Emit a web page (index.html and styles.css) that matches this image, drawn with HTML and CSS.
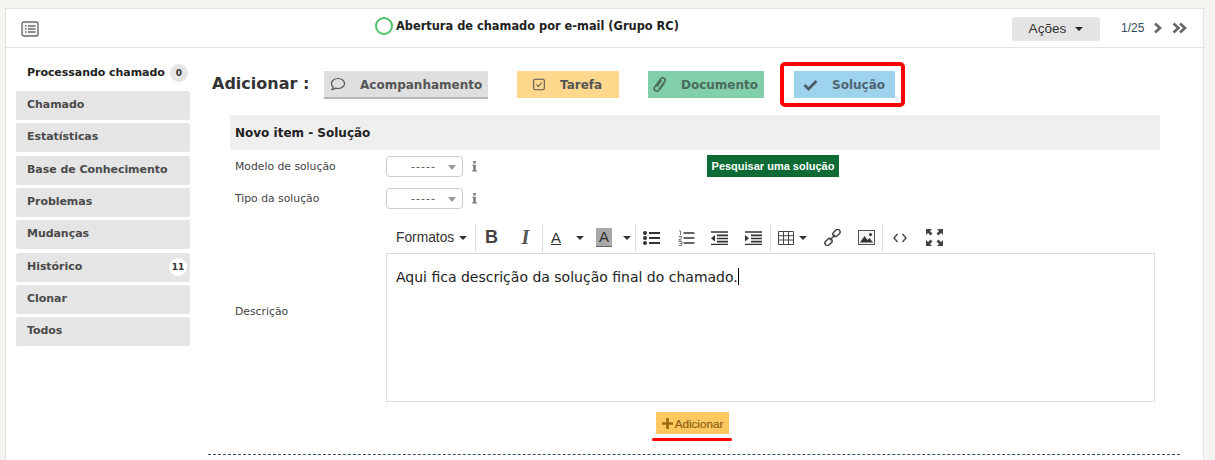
FILE: index.html
```html
<!DOCTYPE html>
<html lang="pt">
<head>
<meta charset="utf-8">
<title>Abertura de chamado</title>
<link rel="stylesheet" href="styles.css">
</head>
<body>
<div class="card">
  <header class="top">
    <svg class="list-icon" width="18" height="16" viewBox="0 0 18 16"><rect x="1" y="1" width="16" height="14" rx="2" fill="#f4f4f4" stroke="#6b6b6b" stroke-width="1.4"/><path d="M4 5h1.5M7 5h7.5M4 8h1.5M7 8h7.5M4 11h1.5M7 11h7.5" stroke="#6b6b6b" stroke-width="1.4"/></svg>
    <div class="title"><span class="ring"></span><span>Abertura de chamado por e-mail (Grupo RC)</span></div>
    <button class="actions">Ações <span class="caret"></span></button>
    <span class="pager">1/25</span>
    <svg class="chev" width="10" height="12" viewBox="0 0 10 12"><path d="M2 1.500 7 6l-5 4.500" fill="none" stroke="#666" stroke-width="2.600"/></svg>
    <svg class="chev2" width="15" height="12" viewBox="0 0 15 12"><path d="M1.500 1.500 6.500 6l-5 4.500M8 1.500 13 6l-5 4.500" fill="none" stroke="#666" stroke-width="2.600"/></svg>
  </header>
  <div class="body">
    <nav class="side">
      <div class="side-head"><span>Processando chamado</span><span class="badge">0</span></div>
      <a class="side-item">Chamado</a>
      <a class="side-item">Estatísticas</a>
      <a class="side-item">Base de Conhecimento</a>
      <a class="side-item">Problemas</a>
      <a class="side-item">Mudanças</a>
      <a class="side-item">Histórico<span class="badge white">11</span></a>
      <a class="side-item">Clonar</a>
      <a class="side-item">Todos</a>
    </nav>
    <main class="main">
      <div class="add-row">
        <strong class="add-label">Adicionar :</strong>
        <button class="tab t-grey">
          <svg width="16" height="15" viewBox="0 0 16 15"><path d="M8 1.500c3.600 0 6.500 2.200 6.500 5s-2.900 5-6.500 5c-.9 0-1.700-.1-2.500-.4-.9.9-2.200 1.500-3.500 1.500.6-.7 1.100-1.600 1.200-2.500C2 9.200 1.500 7.900 1.500 6.500c0-2.800 2.900-5 6.500-5Z" fill="none" stroke="#555" stroke-width="1.200"/></svg>
          <span>Acompanhamento</span>
        </button>
        <button class="tab t-yellow">
          <svg width="12" height="13" viewBox="0 0 12 13"><rect x=".7" y="1.200" width="10.600" height="10.600" rx="1.500" fill="none" stroke="#555" stroke-width="1.100"/><path d="M3.500 6.500 5.300 8.500 8.700 4.500" fill="none" stroke="#555" stroke-width="1.100"/></svg>
          <span>Tarefa</span>
        </button>
        <button class="tab t-green">
          <svg width="13" height="17" viewBox="0 0 13 17"><path d="M11.500 7 6 14c-1.100 1.400-2.700 1.600-3.800.7S.8 12.200 1.900 10.800L7.500 3.200c1.200-1.500 2.800-1.700 3.800-.9s1.100 2.300 0 3.800L6 13.200M8.600 4.200 3.800 10.700" fill="none" stroke="#4c6f5f" stroke-width="1.700"/></svg>
          <span>Documento</span>
        </button>
        <button class="tab t-blue">
          <svg width="15" height="12" viewBox="0 0 15 12"><path d="M1.500 6 5.500 10 13.500 2" fill="none" stroke="#4b5a66" stroke-width="2.800"/></svg>
          <span>Solução</span>
        </button>
        <span class="mark-box"></span>
      </div>
      <section class="form">
        <h2 class="form-title">Novo item - Solução</h2>
        <div class="field">
          <label class="lab">Modelo de solução</label>
          <div class="sel">-----<span class="sel-arrow"></span></div>
          <svg class="info" width="5" height="11" viewBox="0 0 6 13"><path d="M1.500 0h3v3h-3zM.5 4.500h4v6.500h1.200v1.500H.3V11h1.300V6H.5z" fill="#777"/></svg>
          <button class="search">Pesquisar uma solução</button>
        </div>
        <div class="field f2">
          <label class="lab">Tipo da solução</label>
          <div class="sel">-----<span class="sel-arrow"></span></div>
          <svg class="info" width="5" height="11" viewBox="0 0 6 13"><path d="M1.500 0h3v3h-3zM.5 4.500h4v6.500h1.200v1.500H.3V11h1.300V6H.5z" fill="#777"/></svg>
        </div>
        <div class="desc">
          <label class="lab">Descrição</label>
          <div class="editor">
            <div class="toolbar">
              <span class="fmt">Formatos <span class="caret small"></span></span>
              <i class="sep"></i>
              <span class="tb t-b">B</span>
              <span class="tb t-i">I</span>
              <i class="sep s2"></i>
              <span class="tb color"><u>A</u></span><span class="caret small c1"></span>
              <span class="tb hi">A</span><span class="caret small c2"></span>
              <i class="sep s3"></i>
              <svg class="ic i1" width="17" height="16" viewBox="0 0 17 16"><path d="M6 3h11M6 8h11M6 13h11" stroke="#333" stroke-width="2"/><circle cx="2" cy="3" r="2" fill="#333"/><circle cx="2" cy="8" r="2" fill="#333"/><circle cx="2" cy="13" r="2" fill="#333"/></svg>
              <svg class="ic i2" width="17" height="16" viewBox="0 0 17 16"><path d="M5.500 3h11M5.500 8h11M5.500 13h11" stroke="#333" stroke-width="1.700"/><path d="M1 1h1.500v4M.5 6.500h3.200v1.300L.6 10h3.200M.6 11.500h3.200v4H.6M1.500 13.500h2.200" stroke="#555" stroke-width=".8" fill="none"/></svg>
              <svg class="ic i3" width="17" height="14" viewBox="0 0 17 14"><path d="M0 1h17M6 4.300h11M6 7.500h11M6 10.700h11M0 13.500h17" stroke="#333" stroke-width="1.700"/><path d="M4 4v6.500L0 7.200z" fill="#333"/></svg>
              <svg class="ic i4" width="17" height="14" viewBox="0 0 17 14"><path d="M0 1h17M6 4.300h11M6 7.500h11M6 10.700h11M0 13.500h17" stroke="#333" stroke-width="1.700"/><path d="M0 4v6.500l4-3.300z" fill="#333"/></svg>
              <i class="sep s4"></i>
              <svg class="ic i5" width="16" height="14" viewBox="0 0 16 14"><path d="M.5.500h15v13H.5zM.5 4.700h15M.5 9h15M5.500.500v13M10.500.500v13" fill="none" stroke="#444" stroke-width="1"/></svg><span class="caret small c3"></span>
              <svg class="ic i6" width="17" height="17" viewBox="0 0 17 17"><g fill="none" stroke="#444" stroke-width="1.500"><rect x="8.500" y="1.500" width="8" height="5" rx="2.500" transform="rotate(-45 12.500 4)"/><rect x=".5" y="10.500" width="8" height="5" rx="2.500" transform="rotate(-45 4.500 13)"/><path d="M5.800 11.200 11.200 5.800"/></g></svg>
              <svg class="ic i7" width="17" height="15" viewBox="0 0 17 15"><rect x=".5" y=".5" width="16" height="14" fill="#f4f4f4" stroke="#555"/><path d="M2 12.500 6.500 6 9.500 10l2-2 3.500 4.500z" fill="#333"/><circle cx="12.500" cy="4.500" r="1.500" fill="#333"/></svg>
              <i class="sep s5"></i>
              <svg class="ic i8" width="14" height="10" viewBox="0 0 14 10"><path d="M4.500 1 1 5l3.500 4M9.500 1 13 5l-3.500 4" fill="none" stroke="#444" stroke-width="1.400"/></svg>
              <svg class="ic i9" width="17" height="17" viewBox="0 0 17 17"><path d="M0 0h6L4 2l2.500 2.500-2 2L2 4 0 6zM17 0v6l-2-2-2.500 2.500-2-2L13 2l-2-2zM0 17v-6l2 2 2.500-2.500 2 2L4 15l2 2zM17 17h-6l2-2-2.500-2.500 2-2L15 13l2-2z" fill="#444"/></svg>
            </div>
            <div class="edit-area">Aqui fica descrição da solução final do chamado.<span class="cursor"></span></div>
          </div>
        </div>
        <div class="submit-row">
          <button class="submit"><svg width="11" height="11" viewBox="0 0 11 11"><path d="M5.500 0v11M0 5.500h11" stroke="#9a6a10" stroke-width="2.600"/></svg>Adicionar</button>
          <span class="mark-line"></span>
        </div>
      </section>
      <div class="dash"></div>
    </main>
  </div>
</div>
</body>
</html>
```
FILE: styles.css
```css
* { box-sizing: border-box; }
html, body { margin: 0; padding: 0; height: 460px; overflow: hidden; }
body { background: #f5f4f1; padding: 8px 11px 0 5px; font-family: "DejaVu Sans", Verdana, sans-serif; color: #333; }
button { font-family: inherit; border: 0; padding: 0; cursor: pointer; }
.card { background: #fff; border: 1px solid #e3e3e3; border-bottom: 0; height: 452px; overflow: hidden; }
.top { height: 39px; border-bottom: 1px solid #e3e3e3; display: flex; align-items: center; padding-left: 15px; }
.list-icon { flex: none; margin-top: 1px; }
.title { display: flex; align-items: center; gap: 3px; margin-left: 336px; width: 637px; font-size: 11.4px; font-weight: 700; color: #222; margin-top: -4px; flex: none; }
.ring { width: 18px; height: 18px; border: 2px solid #4cc36a; border-radius: 50%; flex: none; }
.actions { width: 88px; height: 24px; background: #e4e4e4; border-radius: 3px; font-family: "Liberation Sans", Arial, sans-serif; font-size: 13.6px; color: #333; flex: none; display: flex; align-items: center; justify-content: center; gap: 9px; margin-top: 1px; }
.caret { display: inline-block; width: 0; height: 0; border: 4px solid transparent; border-top: 4px solid #222; border-bottom: 0; }
.caret.small { border-width: 4px 4px 0; border-top-color: #333; }
.pager { font-family: "Liberation Sans", Arial, sans-serif; font-size: 12px; color: #34495e; margin-left: 21px; flex: none; }
.chev { margin-left: 9px; flex: none; }
.chev2 { margin-left: 9px; flex: none; }
.body { display: flex; }
.side { width: 185px; flex: none; padding: 10px 0 0 10px; display: flex; flex-direction: column; }
.side-head { height: 33px; display: flex; align-items: flex-start; justify-content: space-between; padding: 6px 2px 0 11px; font-size: 11px; font-weight: 700; color: #222; width: 174px; letter-spacing: -.05px; line-height: 18px; }
.side-item { position: relative; width: 174px; height: 29px; background: #e5e5e5; border-radius: 2px; margin-bottom: 3.33px; padding: 7px 11px 0; font-size: 11px; font-weight: 700; color: #4a4a4a; line-height: 14px; letter-spacing: -.05px; }
.badge { width: 18px; height: 18px; border-radius: 50%; background: #e5e5e5; font-size: 9px; font-weight: 700; text-align: center; line-height: 18px; color: #333; flex: none; letter-spacing: 0; }
.badge.white { position: absolute; right: 3px; top: 5px; background: #fff; }
.main { flex: 1; min-width: 0; padding: 15px 22px 0 21px; }
.add-row { display: flex; align-items: flex-start; height: 52px; position: relative; }
.add-label { font-size: 16px; line-height: 22px; color: #333; width: 112px; margin-top: 10px; flex: none; font-weight: 700; }
.tab { height: 28px; font-size: 12px; font-weight: 700; color: #555; display: flex; align-items: center; margin-top: 8px; flex: none; }
.tab svg { flex: none; }
.t-grey { width: 164px; background: #dfdfdf; border-bottom: 2px solid #b5b5b5; padding: 1px 0 0 6px; gap: 14px; margin-right: 29px; }
.t-yellow { width: 102px; background: #ffd78d; padding-left: 16px; gap: 15px; margin-right: 29px; height: 27px; }
.t-green { width: 116px; background: #82cfaa; padding-left: 5px; gap: 15px; margin-right: 30px; height: 27px; color: #4b6b5c; }
.t-blue { width: 101px; background: #9dd3ed; padding-left: 9px; gap: 14px; height: 27px; color: #4f6470; }
.mark-box { position: absolute; left: 568px; top: -1px; width: 125px; height: 45px; border: 4px solid #f00; border-radius: 5px; }
.form { margin-left: 18px; width: 930px; }
.form-title { margin: 0; height: 35px; background: #efefef; font-size: 12px; line-height: 37px; padding-left: 5px; font-weight: 700; color: #222; }
.field { display: flex; align-items: center; height: 22px; margin-top: 5px; }
.f2 { margin-top: 10px; }
.lab { width: 156px; padding-left: 5px; font-size: 10.8px; color: #444; flex: none; }
.sel { width: 77px; height: 21px; border: 1px solid #ccc; border-radius: 4px; font-size: 11px; color: #555; padding-left: 24px; line-height: 19px; position: relative; flex: none; letter-spacing: 1px; }
.sel-arrow { position: absolute; right: 6px; top: 8px; width: 0; height: 0; border: 4px solid transparent; border-top: 5px solid #999; border-bottom: 0; }
.info { margin-left: 9px; flex: none; }
.search { height: 22px; width: 132px; margin-left: 230px; background: #0e6b35; color: #fff; font-family: "Liberation Sans", Arial, sans-serif; font-size: 11px; font-weight: 700; flex: none; }
.desc { display: flex; align-items: center; margin-top: 12px; height: 181px; }
.editor { width: 769px; }
.toolbar { height: 32px; padding-top: 1px; display: flex; align-items: center; font-family: "Liberation Sans", Arial, sans-serif; }
.fmt { width: 89px; padding-left: 10px; font-size: 13.8px; color: #333; white-space: nowrap; flex: none; }
.fmt .caret { margin-left: 1px; vertical-align: 2px; }
.sep { width: 1px; height: 28px; background: #ddd; flex: none; }
.tb { flex: none; color: #333; text-align: center; }
.t-b { font-size: 18px; font-weight: 700; margin-left: 9px; width: 13px; color: #444; }
.t-i { font-size: 20px; font-style: italic; font-weight: 700; font-family: "Liberation Serif", serif; margin-left: 21px; width: 13px; margin-right: 10px; color: #555; }
.color { font-size: 15px; margin-left: 5px; width: 16px; }
.c1 { margin-left: 12px; flex: none; }
.hi { background: #aaa; font-size: 15px; margin-left: 12px; width: 16px; line-height: 18px; border-bottom: 1px solid #666; }
.c2 { margin-left: 11px; flex: none; }
.s3 { margin-left: 4px; }
.ic { flex: none; }
.i1 { margin-left: 7px; }
.i2 { margin-left: 18px; }
.i3 { margin-left: 16px; }
.i4 { margin-left: 17px; }
.s4 { margin-left: 8px; }
.i5 { margin-left: 7px; }
.c3 { margin-left: 5px; flex: none; }
.i6 { margin-left: 17px; }
.i7 { margin-left: 17px; }
.s5 { margin-left: 7px; }
.i8 { margin-left: 10px; }
.i9 { margin-left: 19px; }
.edit-area { height: 149px; border: 1px solid #ddd; padding: 14px 9px; font-size: 14px; line-height: 19px; color: #222; }
.cursor { display: inline-block; width: 1px; height: 17px; background: #000; vertical-align: -3px; }
.submit-row { display: flex; flex-direction: column; align-items: center; width: 930px; padding-top: 10px; }
.submit { width: 73px; height: 22px; background: #fdc85f; color: #8a6012; font-family: "Liberation Sans", Arial, sans-serif; font-size: 11.7px; -webkit-text-stroke: .2px #8a6012; display: flex; align-items: center; justify-content: center; gap: 2px; margin-left: -5px; }
.mark-line { width: 80px; height: 3px; background: #f00; border-radius: 2px; margin-top: 4px; margin-left: -6px; }
.dash { border-top: 1px dashed #34506e; width: 972px; margin-left: -4px; margin-top: 13px; }
```
